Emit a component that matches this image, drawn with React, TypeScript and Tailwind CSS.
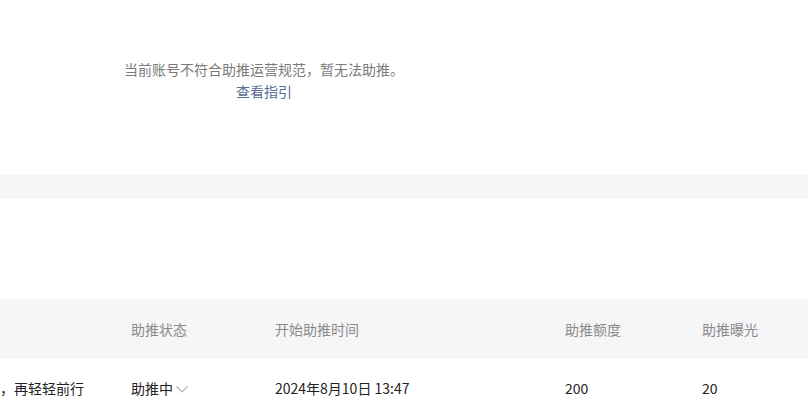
import React from "react";

const font = { fontFamily: '"Noto Sans CJK SC", "Noto Sans", sans-serif' };

function Chevron() {
  return (
    <svg width="14" height="14" viewBox="0 0 14 14" className="ml-[2px] mt-[2px]" fill="none">
      <path d="M1.5 4.5 L7 10 L12.5 4.5" stroke="#b2b2b2" strokeWidth="1.1" />
    </svg>
  );
}

export default function App() {
  return (
    <div className="w-[808px] h-[416px] overflow-hidden bg-white" style={font}>
      <div className="h-[175px] pt-[58px]">
        <div className="w-[528px] text-center text-[14px] leading-[22px]">
          <div className="text-[#7a7a7a]">当前账号不符合助推运营规范，暂无法助推。</div>
          <div className="text-[#576b95]">查看指引</div>
        </div>
      </div>
      <div className="h-[24px] bg-[#f5f6f8]" />
      <div className="h-[100px]" />
      <div className="flex h-[60px] items-center bg-[#f5f6f8] text-[14px] text-[#8a8a8a]">
        <div className="w-[131px] shrink-0" />
        <div className="w-[144px] shrink-0">助推状态</div>
        <div className="w-[290px] shrink-0">开始助推时间</div>
        <div className="w-[137px] shrink-0">助推额度</div>
        <div className="flex-1">助推曝光</div>
      </div>
      <div className="flex h-[58px] items-center text-[14px] text-[#222]">
        <div className="w-[131px] shrink-0 overflow-hidden">
          <div className="-ml-[56px] whitespace-nowrap">先停一停，再轻轻前行</div>
        </div>
        <div className="w-[144px] shrink-0 flex items-center">
          <span>助推中</span>
          <Chevron />
        </div>
        <div className="w-[290px] shrink-0">2024年8月10日 13:47</div>
        <div className="w-[137px] shrink-0">200</div>
        <div className="flex-1">20</div>
      </div>
    </div>
  );
}
